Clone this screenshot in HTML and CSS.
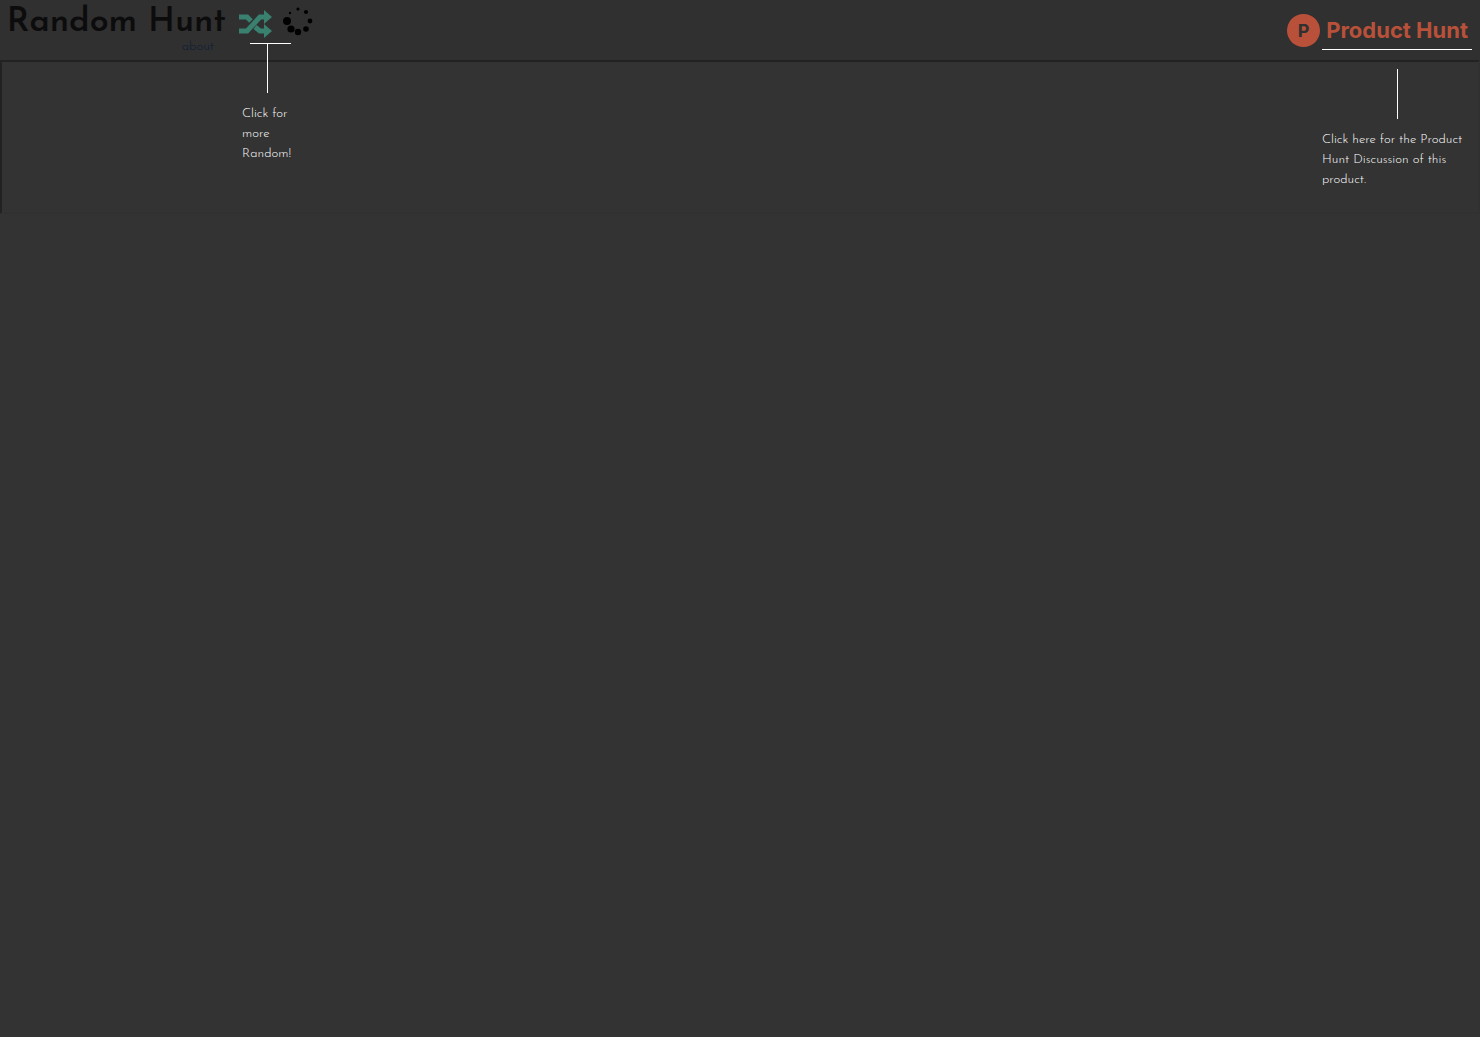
FILE: index.html
```html
<!DOCTYPE html>
<html lang="en">
<head>
  <meta charset="UTF-8" />
  <meta name="viewport" content="width=device-width, initial-scale=1.0" />
  <title>Random Hunt</title>
  <link rel="stylesheet" href="styles.css">
</head>
<body>
  <header class="topbar">
    <div class="brand">
      <h1 class="title">Random Hunt</h1>
      <a class="about" href="#about">about</a>
    </div>

    <div class="random">
      <button class="shuffle" type="button" aria-label="Random product">
        <svg width="34" height="28" viewBox="0 0 34 28">
          <path d="M0 7h8l4 4M0 21h8L21 7h5M16 17l5 4h5" fill="none" stroke="currentColor" stroke-width="5" />
          <path d="M25 0l8 7-8 7zM25 14l8 7-8 7z" fill="currentColor" />
        </svg>
      </button>
      <div class="tip tip-random">
        <p>Click for more Random!</p>
      </div>
    </div>

    <svg class="spinner" width="32" height="32" viewBox="0 0 32 32">
      <circle cx="16" cy="4" r="1.6" />
      <circle cx="24" cy="7" r="2.1" />
      <circle cx="28" cy="16" r="2.4" />
      <circle cx="24" cy="24" r="2.8" />
      <circle cx="16" cy="27" r="3.2" />
      <circle cx="9" cy="24" r="3.6" />
      <circle cx="5" cy="16" r="4" />
      <circle cx="8" cy="8" r="1.2" />
    </svg>

    <div class="hunt">
      <a class="hunt-link" href="#discussion">
        <span class="hunt-badge">P</span>
        <span class="hunt-name">Product Hunt</span>
      </a>
      <div class="tip tip-hunt">
        <p>Click here for the Product Hunt Discussion of this product.</p>
      </div>
    </div>
  </header>

  <main class="viewer"></main>
</body>
</html>
```
FILE: styles.css
```css
:root {
  --page: #333333;
  --bar: #303030;
  --line: #222222;
  --ink: #0c0c0c;
  --green: #39806f;
  --orange: #b9513a;
}

* {
  margin: 0;
  padding: 0;
  box-sizing: border-box;
}

body {
  background-color: var(--page);
  color: var(--ink);
  font-family: 'Josefin Sans', Lato, sans-serif;
  min-height: 100vh;
  overflow-x: hidden;
}

.topbar {
  display: flex;
  align-items: flex-start;
  height: 60px;
  padding: 0 8px 0 10px;
  background-color: var(--bar);
}

.brand {
  display: flex;
  flex-direction: column;
  align-items: flex-end;
  width: 216px;
  padding-top: 5px;
}

.title {
  font-size: 34px;
  font-weight: 600;
  line-height: 36px;
  white-space: nowrap;
}

.about {
  margin-right: 12px;
  color: #0a1c38;
  font-size: 13px;
  font-weight: 300;
  line-height: 12px;
  text-decoration: none;
}

.random {
  position: relative;
  margin-left: 13px;
  padding-top: 10px;
}

.shuffle {
  display: block;
  border: none;
  background: none;
  color: var(--green);
  cursor: pointer;
}

.shuffle svg {
  display: block;
}

.spinner {
  margin: 5px 0 0 9px;
  fill: #000;
}

.hunt {
  position: relative;
  margin-left: auto;
  padding-top: 12px;
}

.hunt-link {
  display: flex;
  align-items: center;
  gap: 6px;
  padding-right: 4px;
  color: var(--orange);
  text-decoration: none;
}

.hunt-badge {
  width: 33px;
  height: 33px;
  border-radius: 50%;
  background-color: var(--orange);
  color: var(--bar);
  font: bold 18px/34px Inter, sans-serif;
  text-align: center;
}

.hunt-name {
  font: bold 22px/36px Inter, sans-serif;
}

/* guided tour pointers */
.tip {
  position: absolute;
  color: #fff;
  font-size: 13px;
  font-weight: 300;
  line-height: 20px;
}

.tip::before {
  content: "";
  display: block;
  height: 1px;
  background-color: #fff;
}

.tip::after {
  content: "";
  position: absolute;
  left: 50%;
  width: 1px;
  height: 50px;
  background-color: #fff;
}

.tip-random {
  top: 43px;
  left: 3px;
  width: 50px;
}

.tip-random::before {
  width: 41px;
  margin-left: 8px;
}

.tip-random::after {
  top: 0;
}

.tip-random p {
  margin-top: 60px;
}

.tip-hunt {
  top: 49px;
  right: 0;
  width: 150px;
}

.tip-hunt::after {
  top: 20px;
}

.tip-hunt p {
  margin-top: 80px;
}

.viewer {
  height: 154px;
  border: 2px solid var(--line);
  border-right-color: #313131;
  border-bottom-color: #313131;
}
```
